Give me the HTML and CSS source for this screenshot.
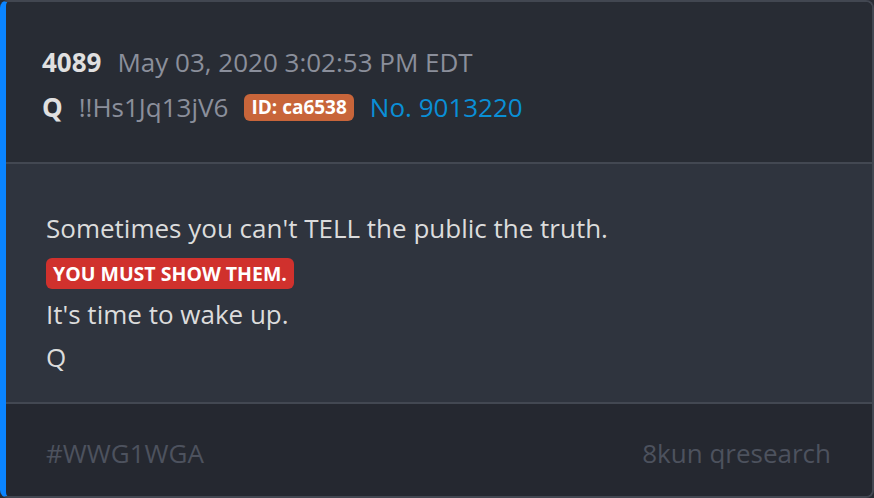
FILE: index.html
```html
<!DOCTYPE html>
<html>
<head>
<meta charset="utf-8">
<link rel="stylesheet" href="styles.css">
</head>
<body>
<div class="card">
  <div class="head">
    <div class="row">
      <span class="num">4089</span>
      <span class="date">May 03, 2020 3:02:53 PM EDT</span>
    </div>
    <div class="row">
      <span class="q">Q</span>
      <span class="trip">!!Hs1Jq13jV6</span>
      <span class="id">ID: ca6538</span>
      <span class="no">No. 9013220</span>
    </div>
  </div>
  <div class="body">
    <p class="line">Sometimes you can't TELL the public the truth.</p>
    <p class="line"><span class="hl">YOU MUST SHOW THEM.</span></p>
    <p class="line">It's time to wake up.</p>
    <p class="line">Q</p>
  </div>
  <div class="foot">
    <span>#WWG1WGA</span>
    <span>8kun qresearch</span>
  </div>
</div>
</body>
</html>
```
FILE: styles.css
```css
html, body {
  margin: 0;
  padding: 0;
  background: #282c34;
}
body {
  width: 874px;
  height: 498px;
  font-family: "Open Sans", sans-serif;
}
.card {
  box-sizing: border-box;
  width: 874px;
  height: 498px;
  border: 2px solid #424751;
  border-left: 6px solid #0a84ff;
  border-radius: 8px;
  display: flex;
  flex-direction: column;
  overflow: hidden;
}
.head {
  background: #282c34;
  height: 162px;
  box-sizing: border-box;
  padding: 42px 0 0 36px;
  border-bottom: 2px solid #434852;
  display: flex;
  flex-direction: column;
  gap: 9px;
}
.row {
  display: flex;
  align-items: center;
  gap: 16px;
  font-size: 26px;
  line-height: 36px;
}
.num, .q {
  font-weight: 700;
  color: #e0e0e0;
}
.date, .trip {
  color: #8b8f9b;
}
.id {
  background: #c8653a;
  color: #fff;
  font-weight: 700;
  font-size: 19px;
  line-height: 27px;
  padding: 0 7px;
  border-radius: 6px;
}
.no {
  color: #0a8fd6;
}
.body {
  background: #2f343e;
  flex: 1;
  box-sizing: border-box;
  padding: 46px 0 0 40px;
  border-bottom: 2px solid #434852;
}
.line {
  margin: 0 0 7px;
  font-size: 26px;
  line-height: 36px;
  color: #dcdcdc;
}
.hl {
  background: #d0312d;
  color: #fff;
  font-weight: 700;
  font-size: 19.5px;
  line-height: 28px;
  padding: 2px 7px;
  border-radius: 6px;
}
.foot {
  background: #252830;
  height: 92px;
  box-sizing: border-box;
  padding: 6px 41px 0 40px;
  display: flex;
  justify-content: space-between;
  align-items: center;
  font-size: 26px;
  color: #4d525e;
}
```
